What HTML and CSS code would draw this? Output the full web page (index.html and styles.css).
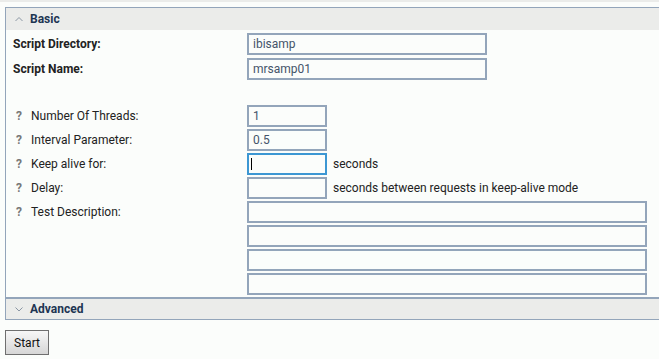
FILE: index.html
```html
<!DOCTYPE html>
<html>
  <head>
    <meta charset="utf-8">
    <meta name="viewport" content="width=device-width, initial-scale=1" />
    <title>Load test</title>
    <link rel="stylesheet" href="styles.css">
  </head>
  <body>
    <div class="top-strip"></div>
    <section class="panel">
      <div class="panel-head">
        <svg class="caret" width="8" height="6" viewBox="0 0 8 6"><path d="M0.5 5 L4 1.5 L7.5 5" fill="none" stroke="#8a96a3" stroke-width="1"/></svg>
        <span>Basic</span>
      </div>
      <div class="panel-body">
        <div class="group script-group">
          <div class="row">
            <label class="label strong">Script Directory:</label>
            <input class="field" type="text" value="ibisamp">
          </div>
          <div class="row">
            <label class="label strong">Script Name:</label>
            <input class="field" type="text" value="mrsamp01">
          </div>
        </div>
        <div class="group">
          <div class="row">
            <label class="label"><span class="help">?</span>Number Of Threads:</label>
            <input class="field short" type="text" value="1">
          </div>
          <div class="row">
            <label class="label"><span class="help">?</span>Interval Parameter:</label>
            <input class="field short" type="text" value="0.5">
          </div>
          <div class="row">
            <label class="label"><span class="help">?</span>Keep alive for:</label>
            <span class="focus-wrap"><input class="field short focused" type="text" value=""></span>
            <span class="unit">seconds</span>
          </div>
          <div class="row">
            <label class="label"><span class="help">?</span>Delay:</label>
            <input class="field short" type="text" value="">
            <span class="unit">seconds between requests in keep-alive mode</span>
          </div>
          <div class="row top">
            <label class="label"><span class="help">?</span>Test Description:</label>
            <div class="lines">
              <input class="field wide" type="text" value="">
              <input class="field wide" type="text" value="">
              <input class="field wide" type="text" value="">
              <input class="field wide" type="text" value="">
            </div>
          </div>
        </div>
      </div>
      <div class="panel-head closed">
        <svg class="caret" width="8" height="6" viewBox="0 0 8 6"><path d="M0.5 1.5 L4 5 L7.5 1.5" fill="none" stroke="#8a96a3" stroke-width="1"/></svg>
        <span>Advanced</span>
      </div>
    </section>
    <button class="start" type="button">Start</button>
  </body>
</html>
```
FILE: styles.css
```css
* {
  box-sizing: border-box;
  margin: 0;
  padding: 0;
}
html,
body {
  height: 100%;
  overflow: hidden;
}
body {
  background-color: #fbfdfb;
  font-family: Roboto, "Liberation Sans", sans-serif;
  font-size: 12px;
  color: #222;
}
.top-strip {
  height: 2px;
  background-color: #ebecea;
}
.panel {
  width: calc(100% - 5px);
  margin: 5px 0 0 5px;
  border-left: 1px solid #93a5ba;
}
.panel-head {
  display: flex;
  align-items: center;
  height: 23px;
  padding-left: 9px;
  border-top: 1px solid #93a5ba;
  background-color: #ebecea;
  color: #1d3552;
  font-weight: bold;
}
.panel-head.closed {
  height: 22px;
  border-bottom: 1px solid #93a5ba;
}
.caret {
  margin-right: 7px;
}
.panel-body {
  padding: 3px 0 2px;
  border-bottom: 1px solid #93a5ba;
}
.group {
  display: flex;
  flex-direction: column;
  gap: 2px;
}
.script-group {
  gap: 3px;
  margin-bottom: 25px;
}
.row {
  display: flex;
  align-items: center;
}
.row.top {
  align-items: flex-start;
}
.row.top .label {
  height: 22px;
}
.label {
  display: flex;
  align-items: center;
  width: 241px;
  padding-left: 7px;
}
.label.strong {
  font-weight: bold;
}
.help {
  width: 18px;
  padding-left: 3px;
  color: #777;
  font-weight: bold;
}
.field {
  display: block;
  width: 240px;
  height: 22px;
  padding: 0 4px;
  border: 2px solid #93a5ba;
  background-color: #fbfdfb;
  color: #44546a;
  font-family: Roboto, "Liberation Sans", sans-serif;
  font-size: 12px;
  outline: none;
}
.field.short {
  width: 80px;
}
.field.wide {
  width: 400px;
}
.field.focused {
  border-color: #3c97d3;
}
.focus-wrap {
  position: relative;
  display: block;
}
.focus-wrap::after {
  content: "";
  position: absolute;
  left: 4px;
  top: 5px;
  width: 1px;
  height: 12px;
  background-color: #000;
}
.lines {
  display: flex;
  flex-direction: column;
  gap: 2px;
}
.unit {
  margin-left: 6px;
}
.start {
  display: block;
  width: 44px;
  height: 25px;
  margin: 10px 0 0 5px;
  border: 1px solid #6f6f6f;
  background: linear-gradient(#f7f7f7, #d6d6d6);
  color: #111;
  font-family: Roboto, "Liberation Sans", sans-serif;
  font-size: 12px;
}
```
